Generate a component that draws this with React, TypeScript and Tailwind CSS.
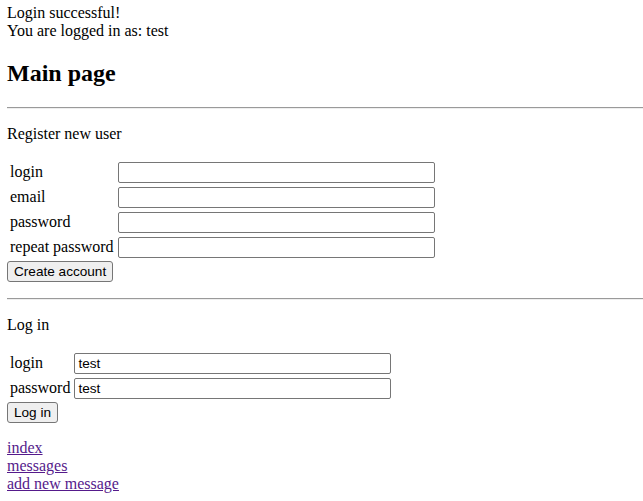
import React from "react";

const serif = "font-['Liberation_Serif','Times_New_Roman',serif]";
const sans = "font-['Liberation_Sans',Arial,sans-serif]";

const Rule = () => (
  <hr className="h-0 border-0 border-t border-b border-t-[#9a9a9a] border-b-[#eeeeee]" />
);

const Field = ({ label, value = "" }: { label: string; value?: string }) => (
  <tr>
    <td className="p-[1px] text-left align-middle whitespace-nowrap">{label}</td>
    <td className="p-[1px] align-middle">
      <input
        type="text"
        defaultValue={value}
        className={`${sans} block h-[21px] w-[317px] rounded-[2px] border border-[#767676] bg-white px-[3px] text-[13.6px] text-black outline-none`}
      />
    </td>
  </tr>
);

const Button = ({ children }: { children: React.ReactNode }) => (
  <button
    type="button"
    className={`${sans} block h-[21px] rounded-[3px] border border-[#767676] bg-[#efefef] px-[6px] text-[13.6px] leading-[normal] text-black`}
  >
    {children}
  </button>
);

export default function App() {
  return (
    <div
      className={`${serif} min-h-[501px] bg-white pl-[7px] pt-1 text-[16px] leading-[normal] text-black`}
    >
      <div>
        Login successful!
        <br />
        You are logged in as: test
      </div>
      <h2 className="my-[19.92px] text-[24px] font-bold leading-[normal]">Main page</h2>
      <Rule />
      <form className="mb-4">
        <p className="my-4">Register new user</p>
        <table className="border-separate border-spacing-[2px]">
          <tbody>
            <Field label="login" />
            <Field label="email" />
            <Field label="password" />
            <Field label="repeat password" />
          </tbody>
        </table>
        <Button>Create account</Button>
      </form>
      <Rule />
      <form className="mb-4">
        <p className="my-4">Log in</p>
        <table className="border-separate border-spacing-[2px]">
          <tbody>
            <Field label="login" value="test" />
            <Field label="password" value="test" />
          </tbody>
        </table>
        <Button>Log in</Button>
      </form>
      <div className="text-[#551a8b]">
        <a href="#" className="underline">index</a>
        <br />
        <a href="#" className="underline">messages</a>
        <br />
        <a href="#" className="underline">add new message</a>
      </div>
    </div>
  );
}
